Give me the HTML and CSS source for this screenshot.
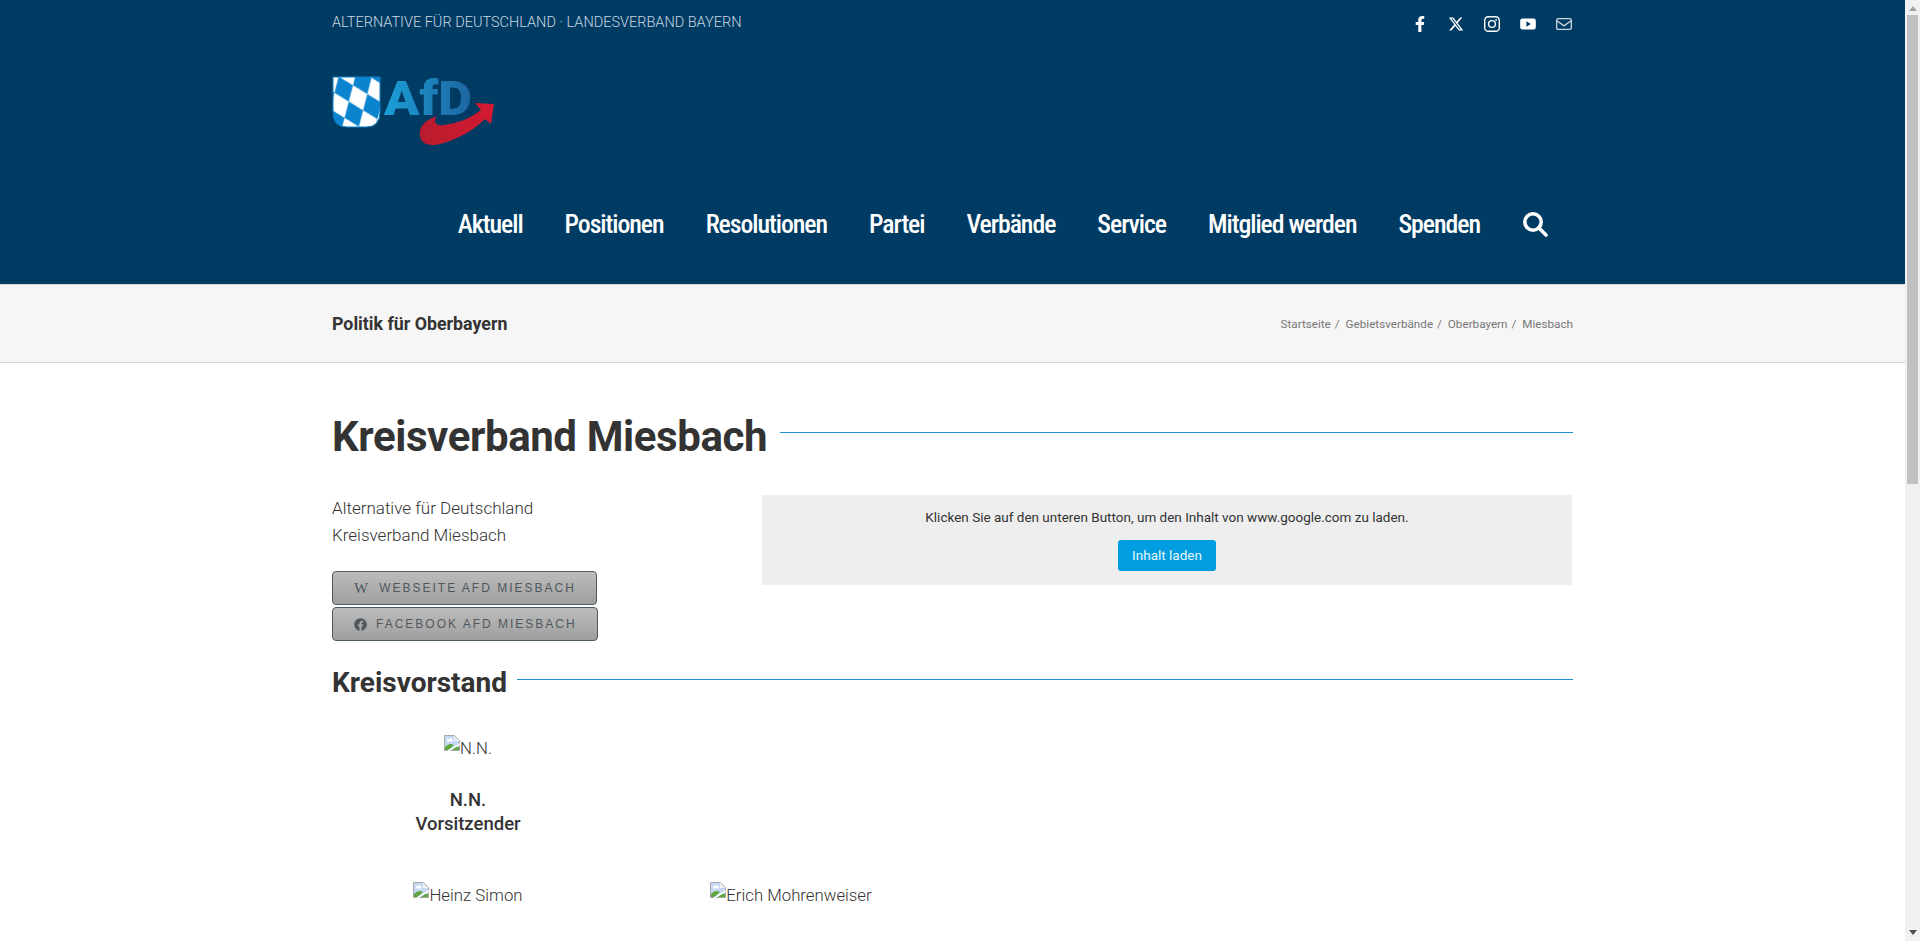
FILE: index.html
```html
<!DOCTYPE html>
<html lang="de">
  <head>
    <meta charset="utf-8">
    <title>Kreisverband Miesbach</title>
    <link rel="stylesheet" href="styles.css">
  </head>
  <body>
    <div class="page">
      <header class="site-header">
        <div class="wrap top-row">
          <span class="top-text">ALTERNATIVE FÜR DEUTSCHLAND · LANDESVERBAND BAYERN</span>
          <div class="social">
            <svg viewBox="0 0 320 512"><path d="M279.14 288l14.22-92.66h-88.91v-60.13c0-25.35 12.42-50.06 52.24-50.06h40.42V6.26S260.43 0 225.36 0c-73.22 0-121.08 44.38-121.08 124.72v70.62H22.89V288h81.39v224h100.17V288z"/></svg>
            <svg viewBox="0 0 512 512"><path d="M389.2 48h70.6L305.6 224.2 487.8 464H345.8L233.7 318.6 106.5 464H35.8L200.7 275.5 26.8 48H172.4L272.9 180.9 389.2 48zM364.4 421.8h39.1L151.1 88h-42L364.4 421.8z"/></svg>
            <svg viewBox="0 0 16 16" class="line-icon"><rect x="0.7" y="0.7" width="14.6" height="14.6" rx="3.6"/><circle cx="8" cy="8" r="3.4"/><circle class="dot" cx="12.1" cy="3.9" r="0.9"/></svg>
            <svg viewBox="0 0 17 16"><path fill-rule="evenodd" d="M2.6 2.2h11.8a2.4 2.4 0 0 1 2.4 2.4v6.8a2.4 2.4 0 0 1-2.4 2.4H2.6a2.4 2.4 0 0 1-2.4-2.4V4.6a2.4 2.4 0 0 1 2.4-2.4zM6.8 5.2v5.6l4.7-2.8z"/></svg>
            <svg viewBox="0 0 17 16" class="line-icon mail"><rect x="0.7" y="2.2" width="15.6" height="11.6" rx="1.5"/><path d="M1 4.5l7.5 5.5 7.5-5.5"/></svg>
          </div>
        </div>
        <div class="wrap logo-row">
          <svg class="logo" viewBox="0 -10 164 80">
            <defs>
              <pattern id="rauten" width="20" height="27" patternUnits="userSpaceOnUse" patternTransform="rotate(-22) translate(-4 3)">
                <rect width="20" height="27" fill="#fff"/>
                <polygon points="10,0 20,13.5 10,27 0,13.5" fill="#0b84cf"/>
              </pattern>
              <linearGradient id="afd-blue" x1="0" x2="1" y1="0" y2="0">
                <stop offset="0" stop-color="#1b9fd9"/>
                <stop offset="1" stop-color="#1d659f"/>
              </linearGradient>
              <linearGradient id="arrow-red" x1="0" x2="1" y1="0" y2="0">
                <stop offset="0" stop-color="#b81c2e"/>
                <stop offset="1" stop-color="#d31a32"/>
              </linearGradient>
            </defs>
            <path d="M1 1H48V36Q48 51 34 51H15Q1 51 1 36Z" fill="url(#rauten)" stroke="#0f7fc4" stroke-width="1"/>
            <text class="logo-text" x="52" y="39" fill="url(#afd-blue)" textLength="88" lengthAdjust="spacingAndGlyphs">AfD</text>
            <path d="M105 40C96 43 86 49 88 60C90 72 105 70 118 65C134 59 146 50 153 43L159 48L162 28L143 27L149 34C140 41 128 47 112 49C103 50 101 45 105 40Z" fill="url(#arrow-red)"/>
          </svg>
        </div>
        <div class="wrap nav-row">
          <nav class="main-nav">
            <a>Aktuell</a>
            <a>Positionen</a>
            <a>Resolutionen</a>
            <a>Partei</a>
            <a>Verbände</a>
            <a>Service</a>
            <a>Mitglied werden</a>
            <a>Spenden</a>
            <svg class="search" viewBox="0 0 26 26"><circle cx="11" cy="11" r="8.2"/><path d="M17 17l7 7"/></svg>
          </nav>
        </div>
      </header>

      <div class="title-bar">
        <div class="wrap title-row">
          <span class="title-text">Politik für Oberbayern</span>
          <div class="crumbs">
            <span>Startseite</span><i>/</i>
            <span>Gebietsverbände</span><i>/</i>
            <span>Oberbayern</span><i>/</i>
            <span>Miesbach</span>
          </div>
        </div>
      </div>

      <main class="wrap content">
        <div class="head-line">
          <h1>Kreisverband Miesbach</h1>
          <div class="rule"></div>
        </div>

        <div class="intro">
          <div>
            <p class="lead">Alternative für Deutschland<br>Kreisverband Miesbach</p>
            <a class="grey-btn first">
              <span class="wiki">W</span>WEBSEITE AFD MIESBACH
            </a>
            <a class="grey-btn second">
              <svg viewBox="0 0 512 512"><path d="M504 256C504 119 393 8 256 8S8 119 8 256c0 123.78 90.69 226.38 209.25 245V327.69h-63V256h63v-54.64c0-62.15 37-96.48 93.67-96.48 27.14 0 55.52 4.84 55.52 4.84v61h-31.28c-30.8 0-40.41 19.12-40.41 38.73V256h68.78l-11 71.69h-57.78V501C413.31 482.38 504 379.78 504 256z"/></svg>FACEBOOK AFD MIESBACH
            </a>
          </div>
          <div class="consent">
            <p>Klicken Sie auf den unteren Button, um den Inhalt von www.google.com zu laden.</p>
            <a class="load-btn">Inhalt laden</a>
          </div>
        </div>

        <div class="head-line sub">
          <h2>Kreisvorstand</h2>
          <div class="rule"></div>
        </div>

        <div class="people">
          <div class="person">
            <div class="photo">
              <svg viewBox="0 0 16 16"><use href="#broken"/></svg><span>N.N.</span>
            </div>
            <p class="person-name">N.N.<br>Vorsitzender</p>
          </div>
        </div>
        <div class="people second-row">
          <div class="person">
            <div class="photo">
              <svg viewBox="0 0 16 16"><use href="#broken"/></svg><span>Heinz Simon</span>
            </div>
          </div>
          <div class="person">
            <div class="photo">
              <svg viewBox="0 0 16 16"><use href="#broken"/></svg><span>Erich Mohrenweiser</span>
            </div>
          </div>
        </div>
      </main>

      <svg class="sprite" viewBox="0 0 16 16">
        <symbol id="broken" viewBox="0 0 16 16">
          <path d="M0.5 0.5H10.5L15.5 5.5V15.5H0.5Z" fill="#fff" stroke="#a8a8a8"/>
          <path d="M1 1H10V6H15V15H1Z" fill="#c6d8f4"/>
          <path d="M10.5 1L15 5.5H10.5Z" fill="#e8e8e8"/>
          <path d="M3 6a1.5 1.5 0 0 1 2-2a2 2 0 0 1 3.5 1a1 1 0 0 1 0 1.5H3.5Z" fill="#fff"/>
          <path d="M1 15V12C4 9 7 8 10 10L5 15Z" fill="#5ea83f"/>
          <path d="M8 15L11 12L15 12V15Z" fill="#5ea83f"/>
          <path d="M4 16L16 9" stroke="#fff" stroke-width="1.5"/>
        </symbol>
      </svg>
    </div>

    <div class="scrollbar">
      <div class="arrow up"></div>
      <div class="thumb"></div>
      <div class="arrow down"></div>
    </div>
  </body>
</html>
```

FILE: styles.css
```css
html, body {
  margin: 0;
  height: 941px;
  overflow: hidden;
}
body {
  display: flex;
  font-family: "Roboto", "Liberation Sans", sans-serif;
  color: #333;
  background: #fff;
}
.page {
  width: 1905px;
  height: 941px;
  overflow: hidden;
}
.wrap {
  width: 1241px;
  margin: 0 auto;
}
.sprite {
  width: 0;
  height: 0;
  display: block;
}

/* header */
.site-header {
  height: 284px;
  background-color: #003b63;
  overflow: hidden;
}
.top-row {
  height: 44px;
  display: flex;
  justify-content: space-between;
  align-items: center;
}
.top-text {
  font-size: 14.5px;
  font-weight: 300;
  color: #c9d6e0;
}
.social {
  display: flex;
  gap: 20px;
  margin-right: 1px;
  margin-top: 4px;
}
.social svg {
  width: 16px;
  height: 16px;
  fill: #fff;
}
.social .line-icon {
  fill: none;
  stroke: #fff;
  stroke-width: 1.4;
}
.social .line-icon .dot {
  fill: #fff;
  stroke: none;
}
.social .mail {
  stroke: #c9d6e0;
}
.logo-row {
  height: 80px;
  padding-top: 22px;
}
.logo {
  width: 164px;
  height: 80px;
  display: block;
}
.logo-text {
  font-family: "Roboto", sans-serif;
  font-weight: 900;
  font-size: 49px;
}
.nav-row {
  padding-top: 50px;
}
.main-nav {
  display: flex;
  justify-content: flex-end;
  align-items: center;
  gap: 42px;
  padding-right: 25px;
  height: 56px;
}
.main-nav a {
  font-family: "Roboto Condensed", "Liberation Sans", sans-serif;
  font-size: 25.8px;
  font-weight: 500;
  letter-spacing: -1.05px;
  color: #fff;
}
.search {
  width: 26px;
  height: 26px;
  fill: none;
  stroke: #fff;
  stroke-width: 3.6;
  stroke-linecap: round;
}

/* title bar */
.title-bar {
  height: 79px;
  background-color: #f6f6f6;
  border-top: 1px solid #d8d8d8;
  border-bottom: 1px solid #d2d3d4;
  box-sizing: border-box;
}
.title-row {
  height: 77px;
  display: flex;
  justify-content: space-between;
  align-items: center;
}
.title-text {
  font-size: 17.8px;
  font-weight: 700;
  color: #333;
}
.crumbs {
  font-size: 11.7px;
  color: #777;
}
.crumbs i {
  font-style: normal;
  margin: 0 3px 0 4px;
}

/* content */
.content {
  padding-top: 44px;
}
.head-line {
  display: flex;
  align-items: center;
}
h1 {
  margin: 0;
  font-size: 42px;
  line-height: 60px;
  font-weight: 700;
  letter-spacing: -0.4px;
  color: #333;
}
h2 {
  margin: 0;
  font-size: 28px;
  line-height: 38px;
  font-weight: 700;
  color: #333;
}
.rule {
  flex: 1;
  border-top: 1px solid #1a8fd1;
  margin-left: 13px;
  margin-bottom: 9px;
}
.sub .rule {
  margin-left: 10px;
  margin-bottom: 7px;
}
.intro {
  display: grid;
  grid-template-columns: 380px 810px;
  gap: 50px;
  margin-top: 28px;
}
.lead {
  margin: 0 0 22px;
  font-size: 17px;
  line-height: 27px;
  font-weight: 300;
  color: #333;
}
.grey-btn {
  display: flex;
  align-items: center;
  box-sizing: border-box;
  height: 34px;
  border: 1px solid #4c5a63;
  border-radius: 4px;
  background: linear-gradient(#bcbcbc, #9f9f9f);
  font-family: "Liberation Sans", sans-serif;
  font-size: 12px;
  letter-spacing: 2px;
  color: #50585e;
}
.first {
  width: 265px;
  padding-left: 21px;
}
.second {
  width: 266px;
  margin-top: 2px;
  padding-left: 21px;
}
.wiki {
  font-family: "Liberation Serif", serif;
  font-size: 15px;
  letter-spacing: 0;
  margin-right: 11px;
}
.grey-btn svg {
  width: 13px;
  height: 13px;
  fill: #50585e;
  margin-right: 9px;
}
.consent {
  height: 90px;
  background-color: #eee;
  text-align: center;
  font-size: 13.5px;
  color: #333;
  padding-top: 13px;
  box-sizing: border-box;
}
.consent p {
  margin: 0;
  line-height: 18px;
}
.load-btn {
  display: block;
  width: 98px;
  height: 31px;
  line-height: 31px;
  margin: 14px auto 0;
  background-color: #009ee0;
  border-radius: 3px;
  font-size: 13.5px;
  color: #e6f5fc;
}
.sub {
  margin-top: 23px;
}

/* people */
.people {
  display: grid;
  grid-template-columns: repeat(4, 272px);
  gap: 51px;
  margin-top: 33px;
}
.second-row {
  margin-top: 46px;
}
.person {
  text-align: center;
}
.photo {
  font-size: 16.8px;
  font-weight: 300;
  line-height: 20px;
  color: #333;
}
.photo svg {
  width: 16px;
  height: 16px;
  vertical-align: 3px;
}
.person-name {
  margin: 30px 0 0;
  font-size: 18.5px;
  line-height: 24px;
  font-weight: 500;
  color: #333;
}

/* fake scrollbar, the page itself is clipped to the window */
.scrollbar {
  width: 15px;
  height: 941px;
  background-color: #f1f1f1;
  display: flex;
  flex-direction: column;
  align-items: center;
}
.thumb {
  width: 11px;
  height: 469px;
  margin-top: 4px;
  background-color: #c1c1c1;
}
.arrow {
  width: 0;
  height: 0;
  border-left: 4px solid transparent;
  border-right: 4px solid transparent;
}
.arrow.up {
  margin-top: 6px;
  border-bottom: 5px solid #a3a3a3;
}
.arrow.down {
  margin-top: auto;
  margin-bottom: 6px;
  border-top: 5px solid #505050;
}
```
